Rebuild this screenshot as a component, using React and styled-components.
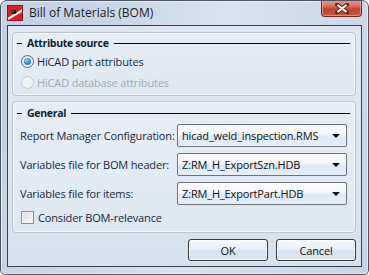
import React from 'react';
import styled, { createGlobalStyle } from 'styled-components';

const Global = createGlobalStyle`
  html, body { margin: 0; padding: 0; background: #ffffff; }
  body { font-family: "Open Sans", "Noto Sans", sans-serif; font-size: 11px; letter-spacing: -0.15px; }
  * { box-sizing: border-box; }
`;

const Window = styled.div`
  width: 369px;
  height: 275px;
  border: 1px solid #4b5662;
  border-radius: 7px 7px 5px 5px;
  background: linear-gradient(100deg, #c0d1e3 0%, #c9d8e8 30%, #dae4ee 55%, #d2deea 70%, #c4d4e5 100%);
  display: flex;
  flex-direction: column;
  overflow: hidden;
  box-shadow: inset 0 0 0 1px rgba(255, 255, 255, 0.55);
`;

const TitleBar = styled.div`
  height: 24px;
  display: flex;
  align-items: flex-start;
  padding-left: 6px;
  padding-right: 6px;
`;

const AppIcon = styled.svg`
  width: 16px;
  height: 16px;
  margin-top: 4px;
  flex: none;
`;

const Title = styled.div`
  margin-left: 6px;
  margin-top: 4px;
  font-size: 12px;
  letter-spacing: 0;
  line-height: 16px;
  color: #1b1b1b;
  flex: 1;
  white-space: nowrap;
`;

const CloseButton = styled.div`
  width: 41px;
  height: 17px;
  margin-top: -1px;
  border: 1px solid #6d2a20;
  border-top: none;
  border-radius: 0 0 4px 4px;
  background: linear-gradient(180deg, #e5a091 0%, #d2705d 40%, #c0452f 55%, #c9553c 100%);
  box-shadow: inset 0 0 0 1px rgba(255, 210, 200, 0.45);
  display: flex;
  align-items: center;
  justify-content: center;
`;

const Client = styled.div`
  flex: 1;
  margin: 0 6px 7px 6px;
  border: 1px solid #3a434d;
  background: linear-gradient(180deg, #dfe8f2 0%, #d8e2ee 100%);
  padding: 6px 5px 5px 4px;
  display: flex;
  flex-direction: column;
  gap: 5px;
`;

const Group = styled.div`
  height: ${p => p.$h}px;
  flex: none;
  border: 1px solid #b9c5d2;
  border-radius: 4px;
  background: linear-gradient(180deg, #e8eef6 0%, #dee7f1 100%);
  box-shadow: inset 0 0 0 1px rgba(255, 255, 255, 0.6);
  padding: ${p => p.$pt}px 0 0 7px;
  display: flex;
  flex-direction: column;
`;

const Header = styled.div`
  height: 16px;
  display: flex;
  align-items: center;
  padding-right: 5px;
  margin-left: -3px;
`;

const Dash = styled.div`
  width: 5px;
  height: 1px;
  background: #000;
  flex: none;
`;

const HeaderText = styled.div`
  font-weight: bold;
  font-size: 10.5px;
  letter-spacing: -0.3px;
  color: #0f1f33;
  margin: 0 5px;
  line-height: 16px;
  white-space: nowrap;
`;

const Rule = styled.div`
  flex: 1;
  height: 1px;
  background: #000;
`;

const OptionRow = styled.div`
  height: 21px;
  display: flex;
  align-items: center;
  gap: 3px;
  color: ${p => (p.$disabled ? '#a3abb4' : '#16293f')};
`;

const Radio = styled.div`
  width: 13px;
  height: 13px;
  margin-left: 1px;
  border-radius: 50%;
  border: 1px solid ${p => (p.$disabled ? '#c3c9cf' : '#52637a')};
  background: ${p => (p.$disabled ? '#f0f2f4' : 'linear-gradient(180deg, #e6eaee, #fbfcfd)')};
  display: flex;
  align-items: center;
  justify-content: center;
  flex: none;
`;

const RadioDot = styled.div`
  width: 7px;
  height: 7px;
  border-radius: 50%;
  background: radial-gradient(circle at 40% 35%, #8fd3ff 0%, #2a8fd8 50%, #0f5ca6 100%);
`;

const FieldRow = styled.div`
  height: 23px;
  margin-top: ${p => p.$mt}px;
  display: flex;
  align-items: center;
  flex: none;
`;

const FieldLabel = styled.div`
  width: 157px;
  flex: none;
  color: #16293f;
  white-space: nowrap;
`;

const Combo = styled.div`
  width: 170px;
  height: 23px;
  flex: none;
  border: 1px solid #6e7379;
  border-radius: 2px;
  background: linear-gradient(180deg, #ffffff 0%, #f3f7fc 45%, #dde9f6 55%, #e6eff9 100%);
  display: flex;
  align-items: center;
  padding-left: 4px;
  padding-right: 6px;
  color: #111;
`;

const ComboText = styled.div`
  flex: 1;
  white-space: nowrap;
  overflow: hidden;
`;

const Arrow = styled.div`
  width: 0;
  height: 0;
  border-left: 4px solid transparent;
  border-right: 4px solid transparent;
  border-top: 4px solid #000;
`;

const CheckRow = styled.div`
  height: 17px;
  margin-top: 4px;
  display: flex;
  align-items: center;
  gap: 4px;
  color: #16293f;
`;

const Check = styled.div`
  width: 13px;
  height: 13px;
  margin-left: 1px;
  border: 1px solid #8e8f8f;
  background: linear-gradient(135deg, #dcdcdc, #f8f8f8);
  box-shadow: inset 0 0 0 1px #f4f4f4;
  flex: none;
`;

const ButtonRow = styled.div`
  display: flex;
  justify-content: flex-end;
  gap: 8px;
  margin-top: 1px;
`;

const Button = styled.div`
  width: 80px;
  height: 22px;
  border: 1px solid #3c3c3c;
  border-radius: 3px;
  background: linear-gradient(180deg, #f6f8fb 0%, #eaf0f7 45%, #d6e2ef 55%, #dfe8f2 100%);
  box-shadow: inset 0 0 0 1px rgba(255, 255, 255, 0.7);
  display: flex;
  align-items: center;
  justify-content: center;
  color: #111;
`;

const fields = [
  ['Report Manager Configuration:', 'hicad_weld_inspection.RMS', 3],
  ['Variables file for BOM header:', 'Z:RM_H_ExportSzn.HDB', 6],
  ['Variables file for items:', 'Z:RM_H_ExportPart.HDB', 6],
];

export default function App() {
  return (
    <>
      <Global />
      <Window>
        <TitleBar>
          <AppIcon viewBox="0 0 16 16">
            <rect x="0" y="0" width="16" height="16" fill="#d61f2b" />
            <rect x="0.5" y="0.5" width="15" height="15" fill="none" stroke="#9b1019" />
            <path d="M1 13 C5 9, 10 8, 15 4 L15 7 C10 10, 6 12, 1 15 Z" fill="#ffffff" />
            <ellipse cx="7" cy="7" rx="2.6" ry="2" fill="#111" />
            <circle cx="6.3" cy="6.4" r="0.7" fill="#888" />
          </AppIcon>
          <Title>Bill of Materials (BOM)</Title>
          <CloseButton>
            <svg width="14" height="11" viewBox="0 0 14 11">
              <path d="M2 1.5 L12 9.5 M12 1.5 L2 9.5" stroke="#5a2a22" strokeWidth="4" strokeLinecap="square" />
              <path d="M2.5 2 L11.5 9 M11.5 2 L2.5 9" stroke="#ffffff" strokeWidth="2.2" />
            </svg>
          </CloseButton>
        </TitleBar>
        <Client>
          <Group $h={64} $pt={2}>
            <Header>
              <Dash />
              <HeaderText>Attribute source</HeaderText>
              <Rule />
            </Header>
            <OptionRow>
              <Radio>
                <RadioDot />
              </Radio>
              <span>HiCAD part attributes</span>
            </OptionRow>
            <OptionRow $disabled>
              <Radio $disabled />
              <span>HiCAD database attributes</span>
            </OptionRow>
          </Group>
          <Group $h={132} $pt={3}>
            <Header>
              <Dash />
              <HeaderText>General</HeaderText>
              <Rule />
            </Header>
            {fields.map(([label, value, mt]) => (
              <FieldRow key={label} $mt={mt}>
                <FieldLabel>{label}</FieldLabel>
                <Combo>
                  <ComboText>{value}</ComboText>
                  <Arrow />
                </Combo>
              </FieldRow>
            ))}
            <CheckRow>
              <Check />
              <span>Consider BOM-relevance</span>
            </CheckRow>
          </Group>
          <ButtonRow>
            <Button>OK</Button>
            <Button>Cancel</Button>
          </ButtonRow>
        </Client>
      </Window>
    </>
  );
}
